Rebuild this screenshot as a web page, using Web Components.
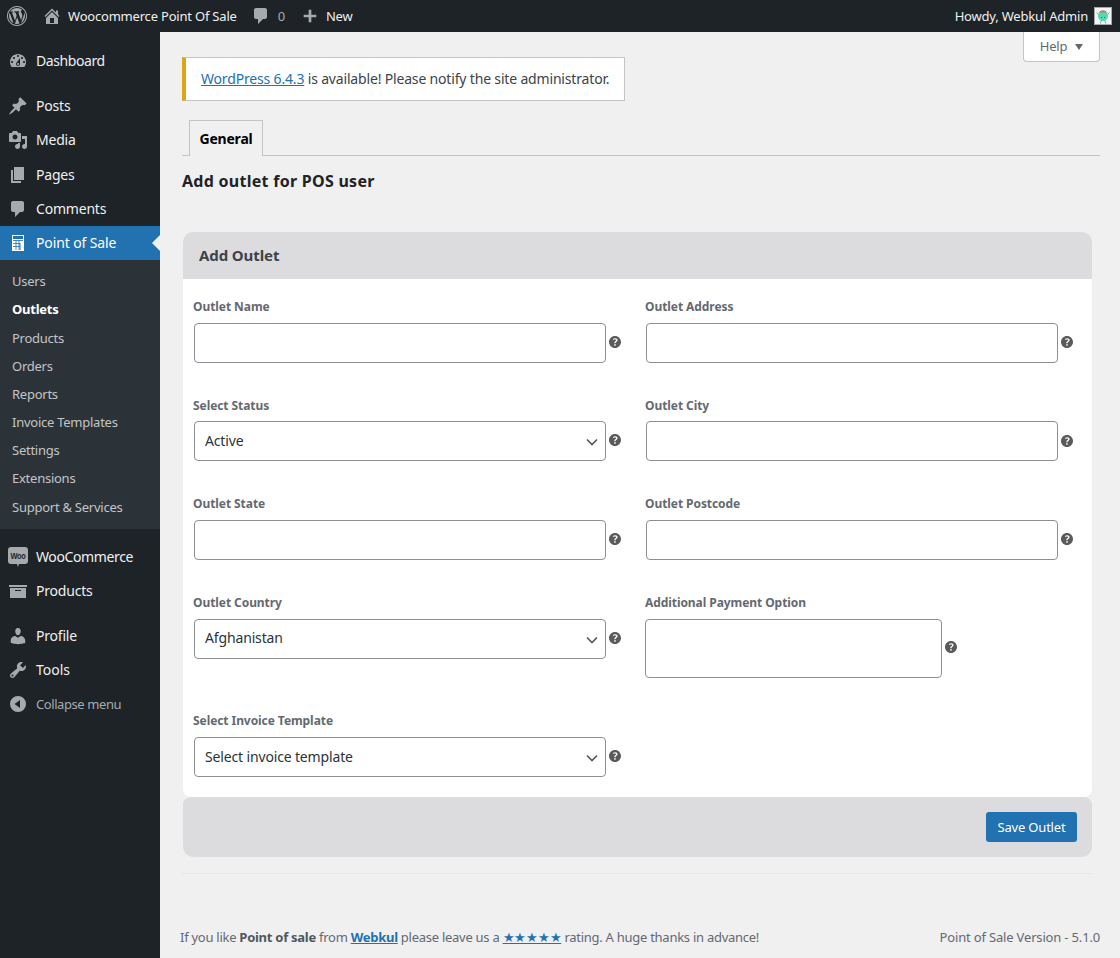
<!DOCTYPE html>
<html lang="en"><head><meta charset="utf-8"><title>Add outlet</title>
<style>
html,body{margin:0;padding:0;height:958px;overflow:hidden;background:#f0f0f1}
body{font:14px/1.4 "Noto Sans",sans-serif;color:#3c434a;display:flex;flex-direction:column}
wp-body{flex:1}
</style></head><body>
<wp-adminbar></wp-adminbar>
<wp-body>
  <wp-sidebar slot="side"></wp-sidebar>
  <wp-main>
    <wp-help></wp-help>
    <wp-notice><a href="#">WordPress 6.4.3</a> is available! Please notify the site administrator.</wp-notice>
    <wp-tabs></wp-tabs>
    <wp-panel heading="Add Outlet" title-text="Add outlet for POS user">
      <wp-field label="Outlet Name" type="text"></wp-field>
      <wp-field label="Outlet Address" type="text"></wp-field>
      <wp-field label="Select Status" type="select" value="Active"></wp-field>
      <wp-field label="Outlet City" type="text"></wp-field>
      <wp-field label="Outlet State" type="text"></wp-field>
      <wp-field label="Outlet Postcode" type="text"></wp-field>
      <wp-field label="Outlet Country" type="select" value="Afghanistan"></wp-field>
      <wp-field label="Additional Payment Option" type="textarea"></wp-field>
      <wp-field label="Select Invoice Template" type="select" value="Select invoice template"></wp-field>
    </wp-panel>
    <wp-foot></wp-foot>
  </wp-main>
</wp-body>
<script>
const P={
wp:'M20 10c0-5.52-4.48-10-10-10S0 4.48 0 10s4.48 10 10 10 10-4.48 10-10zM10 1.01c4.96 0 8.99 4.03 8.99 8.99s-4.03 8.99-8.99 8.99S1.01 14.96 1.01 10 5.04 1.01 10 1.01zM8.01 14.82L4.96 6.61c.49-.03 1.05-.08 1.05-.08.43-.05.38-1.01-.06-.99 0 0-1.29.1-2.13.1-.15 0-.33 0-.52-.01 1.44-2.17 3.9-3.6 6.7-3.6 2.09 0 3.99.79 5.41 2.09-.6-.08-1.45.35-1.45 1.42 0 .66.38 1.22.79 1.88.31.54.5 1.22.5 2.21 0 1.34-1.27 4.48-1.27 4.48l-2.71-7.5c.48-.03.75-.16.75-.16.43-.05.38-1.1-.05-1.08 0 0-1.3.11-2.14.11-.78 0-2.11-.11-2.11-.11-.43-.02-.48 1.06-.05 1.08l.84.08 1.12 3.04zm6.02 2.15L16.64 10s.67-1.69.39-3.81c.63 1.14.94 2.42.94 3.81 0 2.96-1.56 5.58-3.94 7.01zM2.68 6.77L6.5 17.25c-2.67-1.3-4.47-4.05-4.47-7.25 0-1.17.2-2.23.65-3.23zm7.45 4.53l2.29 6.25c-.75.27-1.57.42-2.42.42-.72 0-1.41-.11-2.06-.3z',
home:'M16 8.5l1.53 1.53-1.06 1.06L10 4.62l-6.47 6.47-1.06-1.06L10 2.5l4 4v-2h2v4zm-6-2.46l6 5.99V18H4v-5.97zM12 17v-5H8v5h4z',
comment:'M5 2h9c1.1 0 2 .9 2 2v7c0 1.1-.9 2-2 2h-2l-5 5v-5H5c-1.1 0-2-.9-2-2V4c0-1.1.9-2 2-2z',
plus:'M17 8.5v3h-5.5V17h-3v-5.5H3v-3h5.5V3h3v5.5H17z',
dash:'M3.76 16h12.48c1.1-1.37 1.76-3.11 1.76-5 0-4.42-3.58-8-8-8s-8 3.58-8 8c0 1.89.66 3.63 1.76 5zM10 4c.55 0 1 .45 1 1s-.45 1-1 1-1-.45-1-1 .45-1 1-1zM6 6c.55 0 1 .45 1 1s-.45 1-1 1-1-.45-1-1 .45-1 1-1zm8 0c.55 0 1 .45 1 1s-.45 1-1 1-1-.45-1-1 .45-1 1-1zm-5.37 5.55L12 7v6c0 1.1-.9 2-2 2s-2-.9-2-2c0-.57.24-1.08.63-1.45zM4 10c.55 0 1 .45 1 1s-.45 1-1 1-1-.45-1-1 .45-1 1-1zm12 0c.55 0 1 .45 1 1s-.45 1-1 1-1-.45-1-1 .45-1 1-1zm-5 3c0-.55-.45-1-1-1s-1 .45-1 1 .45 1 1 1 1-.45 1-1z',
post:'M10.44 3.02l1.82-1.82 6.36 6.35-1.83 1.82c-1.05-.68-2.48-.57-3.41.36l-.75.75c-.92.93-1.04 2.35-.35 3.41l-1.83 1.82-2.41-2.41-2.8 2.79c-.42.42-3.38 2.71-3.8 2.29s1.86-3.39 2.28-3.81l2.79-2.79L4.1 9.36l1.83-1.82c1.05.69 2.48.57 3.4-.36l.75-.75c.93-.92 1.05-2.35.36-3.41z',
media:'M13 11V4c0-.55-.45-1-1-1h-1.67L9 1H5L3.67 3H2c-.55 0-1 .45-1 1v7c0 .55.45 1 1 1h10c.55 0 1-.45 1-1zM7 4.5c1.38 0 2.5 1.12 2.5 2.5S8.38 9.5 7 9.5 4.5 8.38 4.5 7 5.62 4.5 7 4.5zM14 6h5v10.5c0 1.38-1.12 2.5-2.5 2.5S14 17.88 14 16.5s1.12-2.5 2.5-2.5c.17 0 .34.02.5.05V9h-3V6zm-4 8.05V13h2v3.5c0 1.38-1.12 2.5-2.5 2.5S7 17.88 7 16.5 8.12 14 9.5 14c.17 0 .34.02.5.05z',
page:'M6 15V2h10v13H6zm-1 1h8v2H3V5h2v11z',
user:'M10 9.25c-2.27 0-2.73-3.44-2.73-3.44C7 4.02 7.82 2 9.97 2c2.16 0 2.98 2.02 2.71 3.81 0 0-.41 3.44-2.68 3.44zm0 2.57L12.72 10c2.39 0 4.52 2.33 4.52 4.53v2.49s-3.65 1.13-7.24 1.13c-3.65 0-7.24-1.13-7.24-1.13v-2.49c0-2.25 1.94-4.48 4.47-4.48z',
tools:'M16.68 9.77c-1.34 1.34-3.3 1.67-4.95.99l-5.41 6.52c-.99.99-2.59.99-3.58 0s-.99-2.59 0-3.57l6.52-5.42c-.68-1.65-.35-3.61.99-4.95 1.28-1.28 3.12-1.62 4.72-1.06l-2.89 2.89 2.82 2.82 2.86-2.87c.53 1.58.18 3.39-1.08 4.65zM3.81 16.21c.4.39 1.04.39 1.43 0 .4-.4.4-1.04 0-1.43-.39-.4-1.03-.4-1.43 0-.39.39-.39 1.03 0 1.43z',
archive:'M19 4v2H1V4h18zM2 7h16v10H2V7zm11 3V9H7v1h6z',
collapse:'M10 2a8 8 0 1 1 0 16 8 8 0 0 1 0-16zM12 14V6l-5.500 4z',
help:'M17 10c0-3.87-3.14-7-7-7-3.87 0-7 3.13-7 7s3.13 7 7 7c3.86 0 7-3.13 7-7zm-6.3 1.48H9.14v-.43c0-.38.08-.7.24-.98s.46-.57.88-.89c.41-.29.68-.53.81-.71.14-.18.2-.39.2-.62 0-.25-.09-.44-.28-.58-.19-.13-.45-.19-.79-.19-.58 0-1.25.19-2 .57l-.64-1.28c.87-.49 1.8-.74 2.77-.74.81 0 1.45.2 1.92.58.48.39.71.91.71 1.55 0 .43-.09.8-.29 1.11-.19.32-.57.67-1.11 1.06-.38.28-.61.49-.71.63-.1.15-.15.34-.15.57v.35zm-1.47 2.74c-.18-.17-.27-.42-.27-.73 0-.33.08-.58.26-.75s.43-.25.77-.25c.32 0 .57.09.75.26s.27.42.27.74c0 .3-.09.55-.27.72-.18.18-.43.27-.75.27-.33 0-.58-.09-.76-.26z'
};
const ico=(n,s=20,c='currentColor',vb='0 0 20 20')=>`<svg width="${s}" height="${s}" viewBox="${vb}" fill="${c}" fill-rule="evenodd" aria-hidden="true"><path d="${P[n]}"/></svg>`;
class Base extends HTMLElement{
  render(css,html){this.attachShadow({mode:'open'}).innerHTML=`<style>${css}</style>${html}`;}
}
class AdminBar extends Base{connectedCallback(){this.render(`
 :host{display:flex;align-items:center;height:32px;background:#1d2327;color:#f0f0f1;font-size:13px;letter-spacing:-.2px;flex:none}
 .i{display:flex;align-items:center;color:#a7aaad}
 span{white-space:nowrap}
 .wp{margin-left:7px}.home{margin-left:15px}.site{margin-left:6px}
 .c{margin-left:14px}.n{margin-left:7px;color:#a7aaad}.p{margin-left:16px}.new{margin-left:7px}
 .r{margin-left:auto;display:flex;align-items:center;padding-right:8px;letter-spacing:-.2px}
 .av{margin-left:6px;display:block}
`,`<span class="i wp">${ico('wp',20,'#a7aaad')}</span>
<span class="i home">${ico('home',20,'#a7aaad')}</span><span class="site">Woocommerce Point Of Sale</span>
<span class="i c">${ico('comment',20,'#a7aaad')}</span><span class="n">0</span>
<span class="i p">${ico('plus',18,'#a7aaad')}</span><span class="new">New</span>
<span class="r"><span>Howdy, Webkul Admin</span>
<svg class="av" width="18" height="18" viewBox="0 0 18 18" aria-hidden="true"><rect x=".5" y=".5" width="17" height="17" fill="#f2f5f2" stroke="#a7aaad"/><path d="M2.500 5.500L5 8M15.500 5.500L13 8M7 14l-.5 2.500M11 14l.5 2.500" stroke="#9aa49d" fill="none"/><ellipse cx="9" cy="9" rx="5" ry="5.200" fill="#4fdcb4"/><path d="M5.200 5.500c1-3 6.600-3 7.600 0z" fill="#c8795f"/><rect x="7" y="10" width="1" height="1" fill="#2b6b58"/><rect x="10" y="10" width="1" height="1" fill="#2b6b58"/></svg></span>`);}}
class Sidebar extends Base{connectedCallback(){
 const m=(n,t,cls='',ls='')=>`<a class="m ${cls}" ${ls?`style="letter-spacing:${ls}px"`:''}>${n}<span>${t}</span></a>`;
 const woo=`<svg width="20" height="20" viewBox="0 0 20 20" aria-hidden="true"><path d="M3 0h14a3 3 0 0 1 3 3v11a3 3 0 0 1-3 3h-6l-1 3-1-3H3a3 3 0 0 1-3-3V3a3 3 0 0 1 3-3z" fill="#a7aaad"/><text x="10" y="12" text-anchor="middle" font-family="Liberation Sans" font-size="9" font-weight="700" textLength="15" lengthAdjust="spacingAndGlyphs" fill="#1d2327">Woo</text></svg>`;
 const calc=`<svg width="20" height="20" viewBox="0 0 20 20" aria-hidden="true"><rect x="4" y="2" width="12" height="16" fill="#fff"/><g fill="#2271b1"><rect x="5" y="3" width="10" height="3"/><rect x="5" y="7" width="10" height=".8"/><rect x="7.600" y="7" width=".8" height="10"/><rect x="10.600" y="7" width=".8" height="10"/><rect x="5" y="10" width="7" height=".8"/><rect x="5" y="13" width="7" height=".8"/><rect x="11.500" y="10" width="1" height="7"/></g></svg>`;
 this.render(`
 :host{display:block;width:160px;background:#1d2327;color:#f0f0f1;font-size:14px;letter-spacing:-.2px;flex:none;padding-top:12px;box-sizing:border-box}
 .m{display:flex;align-items:center;height:34.250px;box-sizing:border-box;padding-left:8px;gap:8px;color:#f0f0f1;position:relative;white-space:nowrap}
 .m svg{fill:#a7aaad;flex:none}
 .m span{position:relative;top:-.2px}
 .sep{height:10.750px}
 .cur{background:#2271b1;color:#fff}
 .cur::after{content:"";position:absolute;right:0;top:9px;border:8px solid transparent;border-right-color:#f0f0f1;border-left:0}
 .sub{background:#2c3338;padding:7.050px 0 8.150px}
 .sub a{display:flex;align-items:center;height:28.170px;padding-left:12px;font-size:13px;color:#c3c4c7;letter-spacing:-.25px}
 .sub a.b{font-weight:700;color:#fff}
 .col{color:#a7aaad;font-size:13px}
 `,
 m(ico('dash'),'Dashboard','','-.42')+'<div class="sep"></div>'+m(ico('post'),'Posts')+m(ico('media'),'Media')+m(ico('page'),'Pages')+m(ico('comment'),'Comments')+
 m(calc,'Point of Sale','cur','-.12')+
 `<div class="sub"><a>Users</a><a class="b">Outlets</a><a>Products</a><a>Orders</a><a>Reports</a><a>Invoice Templates</a><a>Settings</a><a>Extensions</a><a>Support &amp; Services</a></div>`+
 '<div class="sep"></div>'+m(woo,'WooCommerce','','-.38')+m(ico('archive'),'Products')+'<div class="sep"></div>'+m(ico('user'),'Profile')+m(ico('tools'),'Tools','','0')+m(ico('collapse'),'Collapse menu','col','-.42'));}}
class Body extends Base{connectedCallback(){this.render(`:host{display:flex;min-height:0}`,`<slot name="side"></slot><slot></slot>`);}}
class Main extends Base{connectedCallback(){this.render(`:host{display:block;flex:1;min-width:0;padding:0 20px 0 22px;box-sizing:border-box}`,`<slot></slot>`);}}
class Help extends Base{connectedCallback(){this.render(`
 :host{display:flex;justify-content:flex-end;height:0}
 div{flex:none;width:77px;height:30px;box-sizing:border-box;background:#fff;border:1px solid #c3c4c7;border-top:0;border-radius:0 0 4px 4px;color:#646970;font-size:13px;letter-spacing:-.25px;display:flex;align-items:center;justify-content:center;gap:8px}
 i{border:4.500px solid transparent;border-top:6px solid #646970;border-bottom:0}
`,`<div><span>Help</span><i></i></div>`);}}
class Notice extends Base{connectedCallback(){this.render(`
 :host{display:table;margin-top:25px;background:#fff;border:1px solid #c3c4c7;border-left:4px solid #dba617;height:44px;box-sizing:border-box;padding:0 15px;color:#3c434a;font-size:14px;letter-spacing:-.17px;white-space:nowrap;vertical-align:middle}
 div{height:42px;display:flex;align-items:center;gap:.28em}
 ::slotted(a){color:#2271b1;text-decoration:underline}
`,`<div><span><slot></slot></span></div>`);}}
class Tabs extends Base{connectedCallback(){this.render(`
 :host{display:block;margin-top:19px;height:36px;box-sizing:border-box;border-bottom:1px solid #c3c4c7;padding-left:7px}
 div{width:74px;height:36px;box-sizing:border-box;border:1px solid #c3c4c7;border-bottom:0;background:#f0f0f1;color:#000;font-weight:700;font-size:14px;letter-spacing:-.2px;display:flex;align-items:center;justify-content:center}
`,`<div>General</div>`);}}
class Panel extends Base{connectedCallback(){this.render(`
 :host{display:block}
 h2{margin:0;height:76px;padding-top:13px;box-sizing:border-box;font-size:16px;line-height:24px;font-weight:700;color:#1d2327;letter-spacing:.27px}
 section{margin-left:1px;width:909px}
 header{height:47px;background:#dcdcde;border-radius:10px 10px 0 0;display:flex;align-items:center;padding-left:16px;font-size:15px;font-weight:700;color:#3c434a;letter-spacing:-.1px}
 .grid{background:#fff;border-radius:0 0 8px 8px;display:grid;grid-template-columns:452px 1fr;padding:18.300px 0 1.400px 10px;height:518px;box-sizing:border-box;align-content:start}
 footer{height:60px;background:#dcdcde;border-radius:8px 8px 10px 10px;display:flex;align-items:center;justify-content:flex-end;padding-right:15px}
 button{all:unset;width:91px;height:30px;background:#2271b1;border-radius:3px;color:#fff;font-size:13px;letter-spacing:-.2px;text-align:center}
`,`<h2>${this.getAttribute('title-text')}</h2><section><header>${this.getAttribute('heading')}</header><div class="grid"><slot></slot></div><footer><button>Save Outlet</button></footer></section>`);}}
class Field extends Base{connectedCallback(){
 const t=this.getAttribute('type'),v=this.getAttribute('value')||'',l=this.getAttribute('label');
 let c;
 if(t==='text')c=`<div class="ctl"><input type="text" aria-label="${l}"></div>`;
 else if(t==='textarea')c=`<div class="ctl ta"><textarea aria-label="${l}"></textarea></div>`;
 else c=`<div class="ctl"><select aria-label="${l}"><option>${v}</option></select><svg class="ch" width="12" height="8" viewBox="0 0 12 8" aria-hidden="true"><path d="M1 1.500l5 5 5-5" fill="none" stroke="#50575e" stroke-width="1.600"/></svg></div>`;
 this.render(`
 :host{display:block;height:98.600px;color:#646970}
 :host([type=textarea]){height:118.400px}
 label{display:block;height:17px;line-height:19px;font-size:12px;font-weight:700;letter-spacing:-.07px;margin-bottom:8.500px;white-space:nowrap}
 .row{display:flex;align-items:center}
 .ctl{position:relative;margin-left:1px;width:412px;height:40px;flex:none}
 .ta{margin-left:0;width:297px;height:59px}
 input,select,textarea{display:block;width:100%;height:100%;margin:0;box-sizing:border-box;background:#fff;border:1px solid #8c8f94;border-radius:4px;font:14px "Noto Sans",sans-serif;letter-spacing:-.15px;color:#2c3338;padding:0 10px 1.700px;appearance:none;resize:none;outline:0}
 .ch{position:absolute;right:8px;top:17px;pointer-events:none}
 .h{display:block;margin-left:3px;height:12px;line-height:0;position:relative;top:-.6px}
 .sel{top:-1px}
 `,`<label>${l}</label><div class="row">${c}<span class="${t==='select'?'h sel':'h'}">${ico('help',12,'#5a5a5a','3 3 14 14')}</span></div>`);}}
class Foot extends Base{connectedCallback(){this.render(`
 :host{display:block;margin-top:16px;border-top:1px solid #e6e6e7;width:910px;font-size:13px;color:#646970;letter-spacing:-.267px}
 div{display:flex;justify-content:space-between;width:920px;margin:54px 0 0 -2px;white-space:nowrap;line-height:18px}
 a{color:#2271b1;text-decoration:underline}
 b{color:#50575e}
 .v{letter-spacing:-.17px}
`,`<div><span>If you like <b>Point of sale</b> from <b><a href="#">Webkul</a></b> please leave us a <a href="#">★★★★★</a> rating. A huge thanks in advance!</span><span class="v">Point of Sale Version - 5.1.0</span></div>`);}}
customElements.define('wp-adminbar',AdminBar);customElements.define('wp-sidebar',Sidebar);customElements.define('wp-body',Body);
customElements.define('wp-main',Main);customElements.define('wp-help',Help);customElements.define('wp-notice',Notice);
customElements.define('wp-tabs',Tabs);customElements.define('wp-panel',Panel);customElements.define('wp-field',Field);customElements.define('wp-foot',Foot);
</script>
</body></html>
